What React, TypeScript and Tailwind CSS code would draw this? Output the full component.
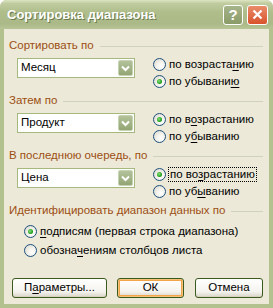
import React from "react";

const font = { fontFamily: '"Liberation Sans", Arial, sans-serif' };

function U({ t, i }: { t: string; i: number }) {
  return (
    <>
      {t.slice(0, i)}
      <span className="underline underline-offset-[2px]">{t[i]}</span>
      {t.slice(i + 1)}
    </>
  );
}

function Radio({ checked }: { checked?: boolean }) {
  return (
    <span className="relative inline-flex w-[13px] h-[13px] shrink-0 rounded-full border border-[#1c5180] bg-[radial-gradient(circle_at_65%_65%,#ffffff_0%,#f3f2ec_40%,#d6d3c4_100%)] items-center justify-center">
      {checked && (
        <span className="w-[5px] h-[5px] rounded-full bg-[radial-gradient(circle_at_40%_40%,#8ee07c_0%,#21a121_60%,#0f7a0f_100%)]" />
      )}
    </span>
  );
}

function RadioRow({
  checked,
  text,
  u,
  focus,
  h = "h-[17px]",
}: {
  checked?: boolean;
  text: string;
  u: number;
  focus?: boolean;
  h?: string;
}) {
  return (
    <div className={`flex items-center ${h}`}>
      <Radio checked={checked} />
      <span
        className={`ml-[3px] leading-[13px] ${
          focus ? "outline outline-1 outline-dotted outline-black px-[1px]" : ""
        }`}
      >
        <U t={text} i={u} />
      </span>
    </div>
  );
}

function Combo({ value }: { value: string }) {
  return (
    <div className="mt-[2px] ml-[8px] w-[118px] h-[20px] border border-[#a5b97f] bg-white flex items-center">
      <span className="ml-[3px] flex-1 text-black">{value}</span>
      <div className="w-[15px] h-[16px] mr-[1px] rounded-[2px] bg-[linear-gradient(#b3c29a,#93a574)] border border-[#c7d2b2] flex items-center justify-center">
        <svg width="9" height="7" viewBox="0 0 9 7">
          <path d="M1 1.5 L4.5 5 L8 1.5" stroke="#ffffff" strokeWidth="2" fill="none" />
        </svg>
      </div>
    </div>
  );
}

function Label({ text }: { text: string }) {
  return (
    <div className="flex items-center h-[14px] mr-[6px]">
      <span className="text-[#9c4e12] whitespace-nowrap">{text}</span>
      <div className="flex-1 h-px bg-[#d0d0bf] ml-[6px]" />
    </div>
  );
}

function Section({
  label,
  value,
  r1,
  r2,
}: {
  label: string;
  value: string;
  r1: { checked?: boolean; text: string; u: number; focus?: boolean };
  r2: { checked?: boolean; text: string; u: number; focus?: boolean };
}) {
  return (
    <div className="h-[55px]">
      <Label text={label} />
      <div className="flex items-start mt-[3px]">
        <Combo value={value} />
        <div className="ml-[18px] flex flex-col">
          <RadioRow {...r1} />
          <RadioRow {...r2} />
        </div>
      </div>
    </div>
  );
}

function Btn({ children, w, def }: { children: React.ReactNode; w: string; def?: boolean }) {
  return (
    <div
      className={`${w} h-[20px] rounded-[3px] border border-[#3b5a1e] bg-[linear-gradient(#ffffff,#f4f3ee_70%,#d9d6c8)] flex items-center justify-center ${
        def ? "shadow-[inset_0_0_0_1px_#f6c27a,inset_0_0_0_2px_#f2a54a]" : "shadow-[inset_0_-1px_0_#d6d0bd]"
      }`}
    >
      {children}
    </div>
  );
}

export default function App() {
  return (
    <div className="w-[273px] h-[308px] bg-[#b3c18f] rounded-t-[7px] flex flex-col text-[11.5px] text-black" style={font}>
      <div className="h-[29px] rounded-t-[7px] bg-[linear-gradient(#dde5c2_0%,#c0cca0_12%,#b0be8c_40%,#aab987_80%,#b7c495_100%)] flex items-center relative">
        <span className="ml-[7px] text-white font-bold text-[13px] [text-shadow:1px_1px_0_#6b7a4c]">
          Сортировка диапазона
        </span>
        <div className="ml-auto flex items-center mr-[5px] gap-[4px]">
          <div className="w-[20px] h-[20px] rounded-[3px] border border-white bg-[linear-gradient(#a6b48a,#8a9b68)] flex items-center justify-center text-white font-bold text-[15px] leading-none">
            ?
          </div>
          <div className="w-[21px] h-[20px] rounded-[3px] border border-white bg-[linear-gradient(#e98c6a,#d9532b)] flex items-center justify-center">
            <svg width="11" height="11" viewBox="0 0 11 11">
              <path d="M1.5 1.5 L9.5 9.5 M9.5 1.5 L1.5 9.5" stroke="#fff" strokeWidth="2.2" />
            </svg>
          </div>
        </div>
      </div>
      <div className="flex-1 mx-[4px] mb-[4px] bg-[#ece9d8] pt-[10px] pl-[5px]">
        <Section
          label="Сортировать по"
          value="Месяц"
          r1={{ text: "по возрастанию", u: 11 }}
          r2={{ text: "по убыванию", u: 10, checked: true }}
        />
        <Section
          label="Затем по"
          value="Продукт"
          r1={{ text: "по возрастанию", u: 4, checked: true }}
          r2={{ text: "по убыванию", u: 4 }}
        />
        <Section
          label="В последнюю очередь, по"
          value="Цена"
          r1={{ text: "по возрастанию", u: 5, checked: true, focus: true }}
          r2={{ text: "по убыванию", u: 5 }}
        />
        <div>
          <Label text="Идентифицировать диапазон данных по" />
          <div className="mt-[4px] ml-[15px] flex flex-col">
            <RadioRow text="подписям (первая строка диапазона)" u={0} checked h="h-[19px]" />
            <RadioRow text="обозначениям столбцов листа" u={6} h="h-[19px]" />
          </div>
        </div>
        <div className="flex mt-[18px] ml-[3px]">
          <Btn w="w-[95px]">
            <U t="Параметры..." i={1} />
          </Btn>
          <div className="ml-[10px]">
            <Btn w="w-[67px]" def>
              ОК
            </Btn>
          </div>
          <div className="ml-[11px]">
            <Btn w="w-[68px]">Отмена</Btn>
          </div>
        </div>
      </div>
    </div>
  );
}
